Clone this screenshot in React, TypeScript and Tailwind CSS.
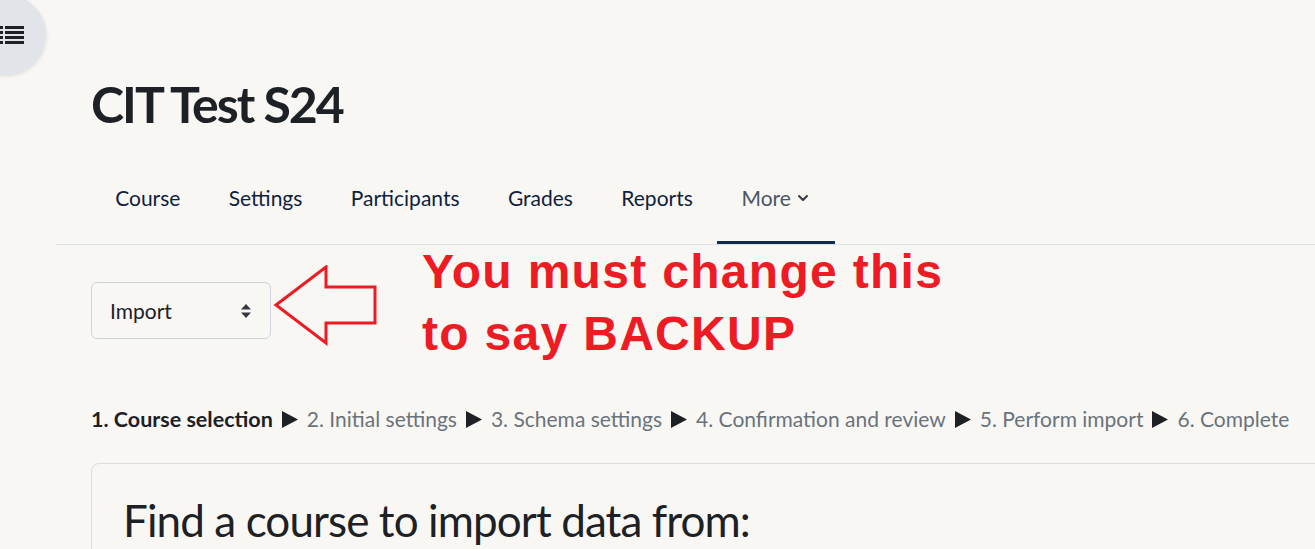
import { ChevronDown } from "lucide-react";

const navItems = ["Course", "Settings", "Participants", "Grades", "Reports"];

const steps = [
  "2. Initial settings",
  "3. Schema settings",
  "4. Confirmation and review",
  "5. Perform import",
  "6. Complete",
];

function DrawerToggle() {
  return (
    <div className="absolute left-[-34px] top-[-5px] w-[80px] h-[80px] rounded-full bg-[#e1e4e8] shadow-[0_1px_4px_rgba(0,0,0,0.12)]">
      <div className="absolute left-[34px] top-[31px] flex flex-col gap-[2px]">
        {[0, 1, 2, 3].map((i) => (
          <div key={i} className="flex gap-[2px]">
            <div className="w-[3px] h-[3px] bg-[#1d2125]" />
            <div className="w-[19px] h-[3px] bg-[#1d2125]" />
          </div>
        ))}
      </div>
    </div>
  );
}

function RedArrow() {
  return (
    <svg width="106" height="82" viewBox="0 0 106 82" className="shrink-0">
      <polygon
        points="3,40 53,2 53,22 102,22 102,58 53,58 53,78"
        fill="none"
        stroke="#ed1c24"
        strokeWidth="3"
        strokeLinejoin="miter"
      />
    </svg>
  );
}

function Arrowhead() {
  return (
    <svg width="16" height="17" viewBox="0 0 16 17" className="inline-block mx-[9px] align-[-1px]">
      <path d="M0 0 L16 8.5 L0 17 Z" fill="#1d2125" />
    </svg>
  );
}

export default function App() {
  return (
    <div className="relative min-h-[549px] bg-[#f8f7f4] overflow-hidden font-['Lato',sans-serif] text-[#1d2125]">
      <DrawerToggle />

      <div className="pl-[56px]">
        {/* Page title */}
        <div className="h-[152px] pl-[35px] pt-[74px]">
          <h1 className="text-[50px] leading-[60px] font-bold tracking-[-2px]">CIT Test S24</h1>
        </div>

        {/* Secondary nav */}
        <div className="border-b border-[#dee2e6] pl-[35px]">
          <ul className="flex text-[21px] text-[#0f1f3d]">
            {navItems.map((item) => (
              <li key={item} className="h-[92px] px-[24.2px] flex items-center">
                {item}
              </li>
            ))}
            <li className="h-[92px] px-[24.5px] flex items-center gap-1 text-[#4b5563] border-b-[3px] border-[#0f2a4a] mb-[-1px] pt-[3px]">
              More
              <ChevronDown className="w-4 h-4 text-[#343a40]" strokeWidth={3} />
            </li>
          </ul>
        </div>

        <div className="pl-[35px]">
          {/* Tertiary nav select + annotation */}
          <div className="flex items-start h-[115px]">
            <div className="mt-[37px] w-[180px] h-[57px] rounded-[6px] border border-[#ced4da] bg-[#f8f7f4] flex items-center justify-between pl-[18px] pr-[18px] text-[21px] text-[#1d2125] shrink-0">
              <span>Import</span>
              <svg width="12" height="16" viewBox="0 0 12 16">
                <path d="M6 1 L11 6.5 L1 6.5 Z M6 15 L11 9.5 L1 9.5 Z" fill="#343a40" />
              </svg>
            </div>
            <div className="mt-[20px] ml-[2px]">
              <RedArrow />
            </div>
            <div className="ml-[43px] mt-[-4px] font-['Liberation_Sans',Arial,sans-serif] font-bold text-[48px] leading-[62px] tracking-[1.3px] text-[#ed1c24]">
              <div>You must change this</div>
              <div>to say BACKUP</div>
            </div>
          </div>

          {/* Steps */}
          <div className="mt-[46px] text-[21px] leading-[26px] text-[#6a737b] whitespace-nowrap">
            <span className="font-bold text-[21.5px] text-[#1d2125]">1. Course selection</span>
            {steps.map((s) => (
              <span key={s}>
                <Arrowhead />
                {s}
              </span>
            ))}
          </div>

          {/* Card */}
          <div className="mt-[31px] mr-[-40px] border border-[#dcdcdc] rounded-[8px] h-[200px] pl-[31px] pt-[28px]">
            <h2 className="text-[44px] leading-[56px] font-normal tracking-[-0.9px] text-[#1d2125]">
              Find a course to import data from:
            </h2>
          </div>
        </div>
      </div>
    </div>
  );
}
